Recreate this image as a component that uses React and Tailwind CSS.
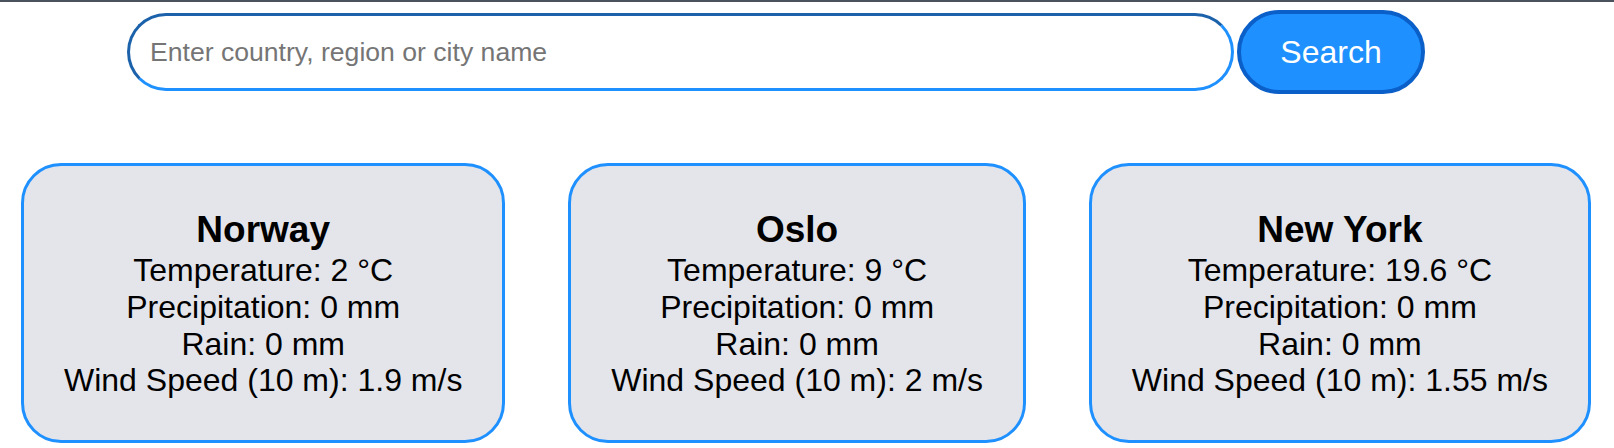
const cities = [
  { name: "Norway", temp: "2", precip: "0", rain: "0", wind: "1.9" },
  { name: "Oslo", temp: "9", precip: "0", rain: "0", wind: "2" },
  { name: "New York", temp: "19.6", precip: "0", rain: "0", wind: "1.55" },
];

function WeatherCard({ city }) {
  return (
    <div className="rounded-[40px] border-[3px] border-[#1e90ff] bg-[#e4e5eb] px-[40px] pt-[42px] pb-[41px] text-center text-black">
      <h2 className="text-[37px] leading-[44px] font-bold">{city.name}</h2>
      <div className="text-[32px] leading-[36.8px]">
        <p>Temperature: {city.temp} °C</p>
        <p>Precipitation: {city.precip} mm</p>
        <p>Rain: {city.rain} mm</p>
        <p>Wind Speed (10 m): {city.wind} m/s</p>
      </div>
    </div>
  );
}

function App() {
  return (
    <div className="min-h-screen w-full bg-white font-['Liberation_Sans',Arial,sans-serif]">
      {/* top edge */}
      <div className="h-[2px] w-full bg-[#4a525e]" />

      {/* Search bar */}
      <div className="flex items-center gap-[3px] pl-[127px] pt-[8px]">
        <input
          type="text"
          placeholder="Enter country, region or city name"
          className="h-[78px] w-[1107px] rounded-full border-[3px] border-t-[#1b62ab] border-l-[#1b62ab] border-r-[#1e90ff] border-b-[#1e90ff] bg-white px-[20px] text-[26.6px] text-black outline-none placeholder:text-[#757575]"
        />
        <button className="h-[84px] w-[188px] rounded-full border-4 border-[#0b5fc8] bg-[#1e90ff] text-[32px] text-white">
          Search
        </button>
      </div>

      {/* Cards */}
      <div className="mt-[69px] flex items-start justify-between pl-[21px] pr-[23px]">
        {cities.map((c) => (
          <WeatherCard key={c.name} city={c} />
        ))}
      </div>
    </div>
  );
}

export default App;
